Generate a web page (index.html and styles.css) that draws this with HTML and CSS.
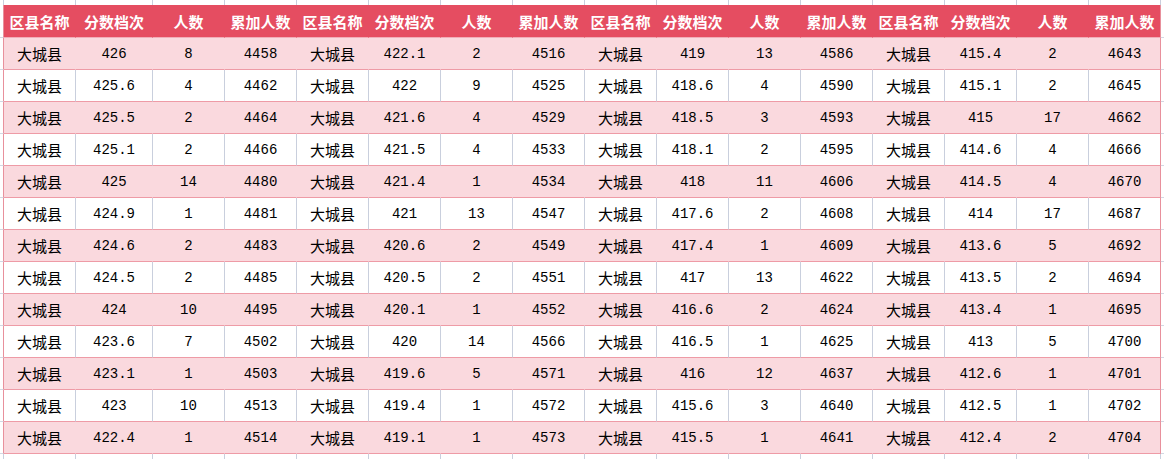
FILE: index.html
```html
<!DOCTYPE html>
<html lang="zh-CN">
<head>
<meta charset="utf-8">
<title>分数档次</title>
<link rel="stylesheet" href="styles.css">
</head>
<body>
<div class="sheet">
<div class="row top"><div class="c g"></div><div class="c"></div><div class="c"></div><div class="c"></div><div class="c"></div><div class="c"></div><div class="c"></div><div class="c"></div><div class="c"></div><div class="c"></div><div class="c"></div><div class="c"></div><div class="c"></div><div class="c"></div><div class="c"></div><div class="c"></div><div class="c"></div><div class="c g"></div></div>
<div class="row head"><div class="c g"></div><div class="c">区县名称</div><div class="c">分数档次</div><div class="c">人数</div><div class="c">累加人数</div><div class="c">区县名称</div><div class="c">分数档次</div><div class="c">人数</div><div class="c">累加人数</div><div class="c">区县名称</div><div class="c">分数档次</div><div class="c">人数</div><div class="c">累加人数</div><div class="c">区县名称</div><div class="c">分数档次</div><div class="c">人数</div><div class="c">累加人数</div><div class="c g"></div></div>
<div class="row d pink"><div class="c g"></div><div class="c t">大城县</div><div class="c n">426</div><div class="c n">8</div><div class="c n">4458</div><div class="c t">大城县</div><div class="c n">422.1</div><div class="c n">2</div><div class="c n">4516</div><div class="c t">大城县</div><div class="c n">419</div><div class="c n">13</div><div class="c n">4586</div><div class="c t">大城县</div><div class="c n">415.4</div><div class="c n">2</div><div class="c n">4643</div><div class="c g"></div></div>
<div class="row d white"><div class="c g"></div><div class="c t">大城县</div><div class="c n">425.6</div><div class="c n">4</div><div class="c n">4462</div><div class="c t">大城县</div><div class="c n">422</div><div class="c n">9</div><div class="c n">4525</div><div class="c t">大城县</div><div class="c n">418.6</div><div class="c n">4</div><div class="c n">4590</div><div class="c t">大城县</div><div class="c n">415.1</div><div class="c n">2</div><div class="c n">4645</div><div class="c g"></div></div>
<div class="row d pink"><div class="c g"></div><div class="c t">大城县</div><div class="c n">425.5</div><div class="c n">2</div><div class="c n">4464</div><div class="c t">大城县</div><div class="c n">421.6</div><div class="c n">4</div><div class="c n">4529</div><div class="c t">大城县</div><div class="c n">418.5</div><div class="c n">3</div><div class="c n">4593</div><div class="c t">大城县</div><div class="c n">415</div><div class="c n">17</div><div class="c n">4662</div><div class="c g"></div></div>
<div class="row d white"><div class="c g"></div><div class="c t">大城县</div><div class="c n">425.1</div><div class="c n">2</div><div class="c n">4466</div><div class="c t">大城县</div><div class="c n">421.5</div><div class="c n">4</div><div class="c n">4533</div><div class="c t">大城县</div><div class="c n">418.1</div><div class="c n">2</div><div class="c n">4595</div><div class="c t">大城县</div><div class="c n">414.6</div><div class="c n">4</div><div class="c n">4666</div><div class="c g"></div></div>
<div class="row d pink"><div class="c g"></div><div class="c t">大城县</div><div class="c n">425</div><div class="c n">14</div><div class="c n">4480</div><div class="c t">大城县</div><div class="c n">421.4</div><div class="c n">1</div><div class="c n">4534</div><div class="c t">大城县</div><div class="c n">418</div><div class="c n">11</div><div class="c n">4606</div><div class="c t">大城县</div><div class="c n">414.5</div><div class="c n">4</div><div class="c n">4670</div><div class="c g"></div></div>
<div class="row d white"><div class="c g"></div><div class="c t">大城县</div><div class="c n">424.9</div><div class="c n">1</div><div class="c n">4481</div><div class="c t">大城县</div><div class="c n">421</div><div class="c n">13</div><div class="c n">4547</div><div class="c t">大城县</div><div class="c n">417.6</div><div class="c n">2</div><div class="c n">4608</div><div class="c t">大城县</div><div class="c n">414</div><div class="c n">17</div><div class="c n">4687</div><div class="c g"></div></div>
<div class="row d pink"><div class="c g"></div><div class="c t">大城县</div><div class="c n">424.6</div><div class="c n">2</div><div class="c n">4483</div><div class="c t">大城县</div><div class="c n">420.6</div><div class="c n">2</div><div class="c n">4549</div><div class="c t">大城县</div><div class="c n">417.4</div><div class="c n">1</div><div class="c n">4609</div><div class="c t">大城县</div><div class="c n">413.6</div><div class="c n">5</div><div class="c n">4692</div><div class="c g"></div></div>
<div class="row d white"><div class="c g"></div><div class="c t">大城县</div><div class="c n">424.5</div><div class="c n">2</div><div class="c n">4485</div><div class="c t">大城县</div><div class="c n">420.5</div><div class="c n">2</div><div class="c n">4551</div><div class="c t">大城县</div><div class="c n">417</div><div class="c n">13</div><div class="c n">4622</div><div class="c t">大城县</div><div class="c n">413.5</div><div class="c n">2</div><div class="c n">4694</div><div class="c g"></div></div>
<div class="row d pink"><div class="c g"></div><div class="c t">大城县</div><div class="c n">424</div><div class="c n">10</div><div class="c n">4495</div><div class="c t">大城县</div><div class="c n">420.1</div><div class="c n">1</div><div class="c n">4552</div><div class="c t">大城县</div><div class="c n">416.6</div><div class="c n">2</div><div class="c n">4624</div><div class="c t">大城县</div><div class="c n">413.4</div><div class="c n">1</div><div class="c n">4695</div><div class="c g"></div></div>
<div class="row d white"><div class="c g"></div><div class="c t">大城县</div><div class="c n">423.6</div><div class="c n">7</div><div class="c n">4502</div><div class="c t">大城县</div><div class="c n">420</div><div class="c n">14</div><div class="c n">4566</div><div class="c t">大城县</div><div class="c n">416.5</div><div class="c n">1</div><div class="c n">4625</div><div class="c t">大城县</div><div class="c n">413</div><div class="c n">5</div><div class="c n">4700</div><div class="c g"></div></div>
<div class="row d pink"><div class="c g"></div><div class="c t">大城县</div><div class="c n">423.1</div><div class="c n">1</div><div class="c n">4503</div><div class="c t">大城县</div><div class="c n">419.6</div><div class="c n">5</div><div class="c n">4571</div><div class="c t">大城县</div><div class="c n">416</div><div class="c n">12</div><div class="c n">4637</div><div class="c t">大城县</div><div class="c n">412.6</div><div class="c n">1</div><div class="c n">4701</div><div class="c g"></div></div>
<div class="row d white"><div class="c g"></div><div class="c t">大城县</div><div class="c n">423</div><div class="c n">10</div><div class="c n">4513</div><div class="c t">大城县</div><div class="c n">419.4</div><div class="c n">1</div><div class="c n">4572</div><div class="c t">大城县</div><div class="c n">415.6</div><div class="c n">3</div><div class="c n">4640</div><div class="c t">大城县</div><div class="c n">412.5</div><div class="c n">1</div><div class="c n">4702</div><div class="c g"></div></div>
<div class="row d pink"><div class="c g"></div><div class="c t">大城县</div><div class="c n">422.4</div><div class="c n">1</div><div class="c n">4514</div><div class="c t">大城县</div><div class="c n">419.1</div><div class="c n">1</div><div class="c n">4573</div><div class="c t">大城县</div><div class="c n">415.5</div><div class="c n">1</div><div class="c n">4641</div><div class="c t">大城县</div><div class="c n">412.4</div><div class="c n">2</div><div class="c n">4704</div><div class="c g"></div></div>
<div class="row bottom"><div class="c g"></div><div class="c"></div><div class="c"></div><div class="c"></div><div class="c"></div><div class="c"></div><div class="c"></div><div class="c"></div><div class="c"></div><div class="c"></div><div class="c"></div><div class="c"></div><div class="c"></div><div class="c"></div><div class="c"></div><div class="c"></div><div class="c"></div><div class="c g"></div></div>
</div>
</body>
</html>
```

FILE: styles.css
```css
html, body {
  margin: 0;
  padding: 0;
  background: #ffffff;
}

.sheet {
  width: 1164px;
  height: 459px;
  overflow: hidden;
}

.row {
  display: grid;
  grid-template-columns: 4px 72px 77px repeat(14, 72px) 3px;
}

.c {
  box-sizing: border-box;
  border-right: 1px solid #c9cfdd;
  display: flex;
  align-items: center;
  justify-content: center;
  white-space: nowrap;
  overflow: hidden;
  color: #000000;
}

.row > .c:last-child {
  border-right: 0;
}

.top {
  height: 5px;
}

.bottom {
  height: 6px;
}

.head {
  height: 33px;
}

.head .c {
  background: #e54d61;
  color: #ffffff;
  font-family: "Noto Sans CJK SC", sans-serif;
  font-weight: 700;
  font-size: 15px;
  border-right-color: #e54d61;
  border-bottom: 1px solid #f1aeb8;
}

.d {
  height: 32px;
}

.d .c {
  border-bottom: 1px solid #ee9ba6;
}

.pink .c {
  background: #fad9de;
  border-right-color: #fad9de;
}

.white .c {
  background: #ffffff;
  border-right-color: #c9cfdd;
}

.head .c:nth-child(17),
.d .c:nth-child(17) {
  border-right-color: #e8909c;
}

.row .c.g {
  background: #ffffff;
  border-bottom: 1px solid #d3d8e3;
}

.head .c.g:first-child,
.d .c.g:first-child {
  border-right-color: #e8909c;
}

.top .c.g,
.bottom .c.g {
  border-bottom: 0;
}

.t {
  font-family: "Noto Sans CJK SC", sans-serif;
  font-size: 15px;
}

.n {
  font-family: "Liberation Mono", monospace;
  font-size: 14px;
}
```
